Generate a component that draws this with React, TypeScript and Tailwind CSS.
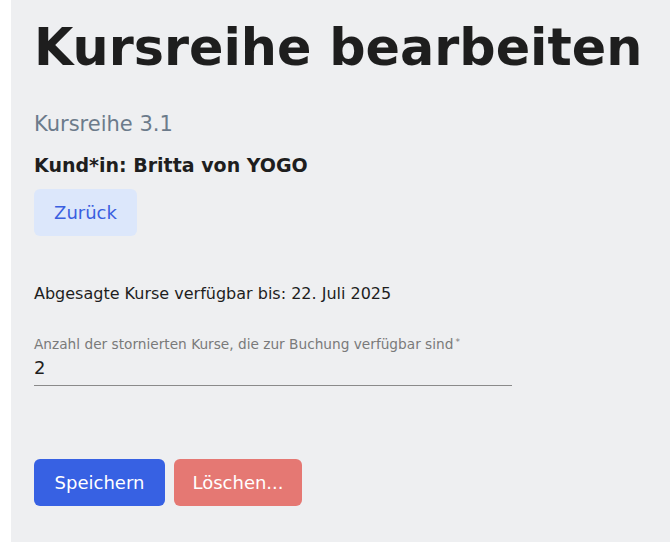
export default function App() {
  return (
    <div className="flex min-h-[542px] w-full bg-white" style={{ fontFamily: '"DejaVu Sans", sans-serif' }}>
      <div className="w-[11px] shrink-0 bg-white" />
      <main className="flex-1 bg-[#eeeff1] pl-[23px] pt-[16px]">
        <h1 className="text-[50.8px] font-bold leading-[64px] text-[#1e1e1e]">Kursreihe bearbeiten</h1>
        <h2 className="mt-[30px] text-[21px] leading-[28px] text-[#6c7b8b]">Kursreihe 3.1</h2>
        <h3 className="mt-[14px] text-[19px] font-bold leading-[26px] text-[#1e1e1e]">Kund*in: Britta von YOGO</h3>
        <button className="mt-[11px] h-[47px] w-[103px] rounded-md bg-[#dce7fb] text-[18px] text-[#3a5fe0]">Zurück</button>
        <p className="mt-[47px] text-[16px] leading-[22px] text-[#1e1e1e]">Abgesagte Kurse verfügbar bis: 22. Juli 2025</p>
        <div className="mt-[30px] w-[478px]">
          <label className="block text-[13.7px] leading-[18px] text-[#7a7a7a]">
            Anzahl der stornierten Kurse, die zur Buchung verfügbar sind<sup className="ml-[2px] text-[9px]">*</sup>
          </label>
          <div className="border-b border-[#8a8a8a] pb-[6px] pt-[4px] text-[18px] leading-[22px] text-[#1e1e1e]">2</div>
        </div>
        <div className="mt-[73px] flex gap-[9px]">
          <button className="h-[47px] w-[131px] rounded-md bg-[#3761e3] text-[18px] text-white">Speichern</button>
          <button className="h-[47px] w-[128px] rounded-md bg-[#e57873] text-[18px] text-white">Löschen...</button>
        </div>
      </main>
    </div>
  )
}
